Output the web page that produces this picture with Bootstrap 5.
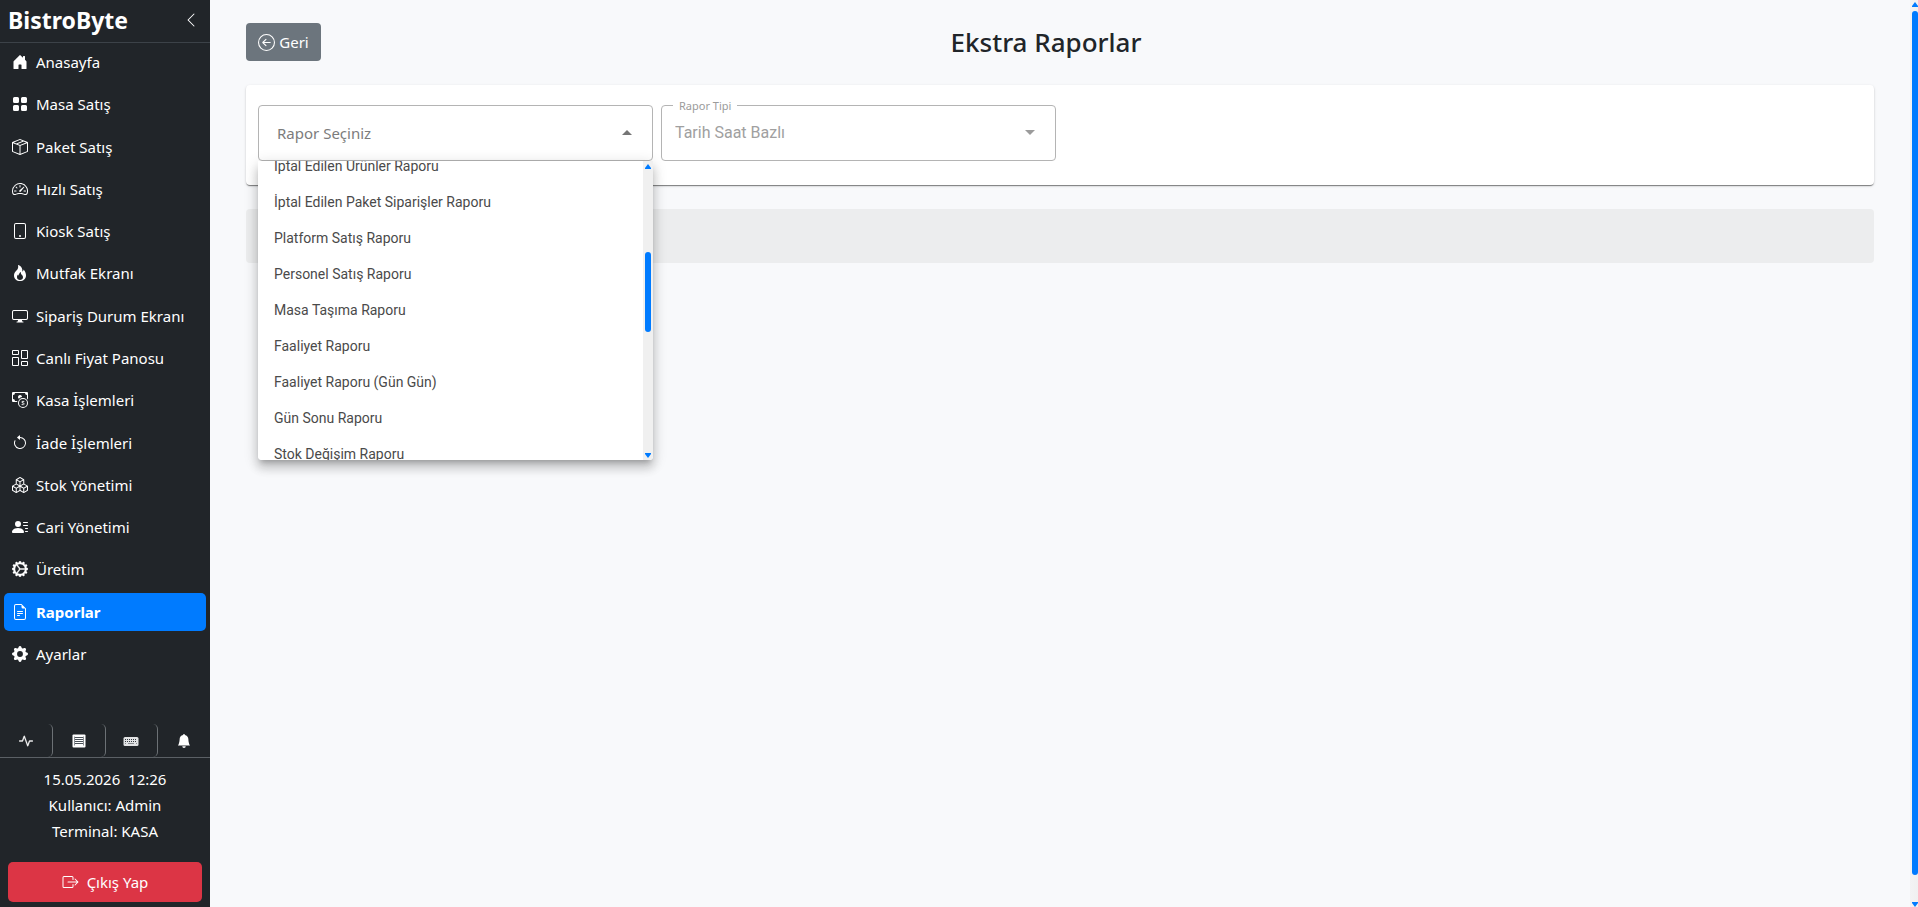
<!DOCTYPE html>
<html lang="tr">
<head>
<meta charset="utf-8">
<meta name="viewport" content="width=device-width, initial-scale=1">
<title>BistroByte - Ekstra Raporlar</title>
<link href="https://cdn.jsdelivr.net/npm/bootstrap@5.3.0/dist/css/bootstrap.min.css" rel="stylesheet">
<style>
  :root { --brand: #007bff; --track: #f0f0f0; }
  body { font-family: "Noto Sans", "Open Sans", sans-serif; font-size: 15px; background: #f8f9fb; }
  svg { display: block; flex: none; }
  .sidebar { width: 210px; background: #212529; color: #fff; }
  .brand-bar { height: 43px; padding: 0 11px 2px 8px; border-bottom: 1px solid #3c4248; }
  .brand-name { font-size: 23px; font-weight: 700; line-height: 32px; color: #fff; text-decoration: none; }
  .collapse-btn { background: none; border: 0; color: #fff; padding: 0; }
  .menu-list { padding: 0 4px 51px; }
  .menu-list .nav-link { color: #fff; height: 38px; padding: 0 8px; gap: 8px; line-height: 24px; border-radius: 5px; }
  .menu-list .nav-link.active { background: var(--brand); font-weight: 700; }
  .tray { border-bottom: 1px solid #5b6065; height: 34px; }
  .tray button { flex: 1 1 0; background: none; color: #fff; border: 0; border-right: 1px solid #6c7175; border-radius: 0 5px 5px 0; padding: 0; }
  .tray button:last-child { border-right: 0; }
  .session-info { line-height: 26px; padding: 8px 0 18px; }
  .exit-btn { height: 40px; margin: 0 8px 5px; font-size: 15px; background: #dc3545; gap: 8px; border-radius: 5px; }
  .page-body { padding: 23px 36px; }
  .page-head { display: grid; grid-template-columns: 1fr auto 1fr; padding-right: 28px; margin-bottom: 24px; }
  .back-btn { height: 38px; width: 75px; padding: 0; gap: 4px; font-size: 15px; background: #6c757d; border: 0; border-radius: 4px; }
  .page-title { font-size: 26px; font-weight: 500; line-height: 38px; margin: 0; color: #212529; }
  .filter-card { background: #fff; border-radius: 4px; padding: 20px 12px 24px; margin-bottom: 24px;
    box-shadow: 0 2px 1px -1px rgba(0,0,0,.3), 0 1px 1px rgba(0,0,0,.2), 0 1px 3px rgba(0,0,0,.14); }
  .filter-grid { display: grid; grid-template-columns: repeat(4, 1fr); gap: 8px; }
  .field { position: relative; }
  .field select { appearance: none; display: block; width: 100%; height: 56px; border: 1px solid #b4b4b4; border-radius: 4px; background: #fff; color: #7c7c7c; padding: 0 18px; font-size: 15px; opacity: 1; }
  .field select:disabled { font-family: Roboto, sans-serif; font-size: 16px; color: #a0a0a0; padding: 0 13px; }
  .field .arrow { position: absolute; right: 21px; top: 25px; pointer-events: none; }
  .field .legend-label { position: absolute; left: 12px; top: -8px; padding: 0 6px; background: #fff; color: #9b9b9b; font-size: 11px; line-height: 18px; }
  .options-panel { position: absolute; left: 0; right: 0; top: 56px; height: 299px; z-index: 5; background: #fff; overflow: hidden; border-radius: 0 0 4px 4px; }
  .panel-shadow { position: absolute; left: 0; right: 0; top: 56px; height: 299px; z-index: 4; border-radius: 4px;
    box-shadow: 0 5px 5px -3px rgba(0,0,0,.2), 0 8px 10px 1px rgba(0,0,0,.14), 0 3px 14px 2px rgba(0,0,0,.12); }
  .options-panel ul { margin: -13px 0 0; }
  .options-panel button { display: block; width: 100%; height: 36px; border: 0; background: none; text-align: left; padding: 0 16px; font: 14px/36px Roboto, sans-serif; color: #4a4a4a; }
  .bar { display: flex; flex-direction: column; align-items: center; background: var(--track); color: var(--brand); }
  .bar-panel { width: 10px; padding: 3px 0 2px; }
  .bar-panel .thumb { width: 6px; height: 80px; margin-bottom: 121px; }
  .bar-window { width: 8px; align-items: flex-end; padding: 2px 0 0; background: linear-gradient(90deg, #f3f3f4, #f0f0f0); }
  .thumb { background: var(--brand); border-radius: 3px; }
  .bar-window .thumb { width: 6px; flex: 1; margin: 4px 0 27px; }
  .result-strip { height: 54px; background: #ecedee; border-radius: 4px; }
</style>
</head>
<body>
<div class="d-flex min-vh-100">
  <aside class="sidebar d-flex flex-column vh-100 flex-shrink-0">
    <div class="brand-bar d-flex align-items-center justify-content-between">
      <a href="#" class="brand-name">BistroByte</a>
      <button type="button" class="collapse-btn" aria-label="Menüyü daralt"><svg width="16" height="16" fill="currentColor" viewBox="0 0 16 16"><path d="M11.354 1.646a.5.5 0 0 1 0 .708L5.707 8l5.647 5.646a.5.5 0 0 1-.708.708l-6-6a.5.5 0 0 1 0-.708l6-6a.5.5 0 0 1 .708 0z"/></svg></button>
    </div>
    <ul class="menu-list list-unstyled d-flex flex-column justify-content-between flex-grow-1 mb-0">
      <li><a href="#" class="nav-link d-flex align-items-center"><svg width="16" height="16" fill="currentColor" viewBox="0 0 16 16"><path d="M6.5 14.5v-3.505c0-.245.25-.495.5-.495h2c.25 0 .5.25.5.5v3.5a.5.5 0 0 0 .5.5h4a.5.5 0 0 0 .5-.5v-7a.5.5 0 0 0-.146-.354L13 5.793V2.5a.5.5 0 0 0-.5-.5h-1a.5.5 0 0 0-.5.5v1.293L8.354 1.146a.5.5 0 0 0-.708 0l-6 6A.5.5 0 0 0 1.5 7.5v7a.5.5 0 0 0 .5.5h4a.5.5 0 0 0 .5-.5z"/></svg>Anasayfa</a></li>
      <li><a href="#" class="nav-link d-flex align-items-center"><svg width="16" height="16" fill="currentColor" viewBox="0 0 16 16"><path d="M1 2.500A1.500 1.500 0 0 1 2.500 1h3A1.500 1.500 0 0 1 7 2.500v3A1.500 1.500 0 0 1 5.500 7h-3A1.500 1.500 0 0 1 1 5.500zm8 0A1.500 1.500 0 0 1 10.500 1h3A1.500 1.500 0 0 1 15 2.500v3A1.500 1.500 0 0 1 13.500 7h-3A1.500 1.500 0 0 1 9 5.500zm-8 8A1.500 1.500 0 0 1 2.500 9h3A1.500 1.500 0 0 1 7 10.500v3A1.500 1.500 0 0 1 5.500 15h-3A1.500 1.500 0 0 1 1 13.500zm8 0A1.500 1.500 0 0 1 10.500 9h3a1.500 1.500 0 0 1 1.500 1.500v3a1.500 1.500 0 0 1-1.500 1.500h-3A1.500 1.500 0 0 1 9 13.500z"/></svg>Masa Satış</a></li>
      <li><a href="#" class="nav-link d-flex align-items-center"><svg width="16" height="16" fill="currentColor" viewBox="0 0 16 16"><path d="M8.186 1.113a.5.5 0 0 0-.372 0L1.846 3.500l2.404.961L10.404 2l-2.218-.887zm3.564 1.426L5.596 5 8 5.961 14.154 3.500l-2.404-.961zm3.250 1.700-6.500 2.600v7.922l6.500-2.600V4.240zM7.500 14.762V6.838L1 4.239v7.923l6.500 2.600zM7.443.184a1.500 1.500 0 0 1 1.114 0l7.129 2.852A.5.5 0 0 1 16 3.500v8.662a1 1 0 0 1-.629.928l-7.185 2.874a.5.5 0 0 1-.372 0L.630 13.090a1 1 0 0 1-.630-.928V3.500a.5.5 0 0 1 .314-.464L7.443.184z"/></svg>Paket Satış</a></li>
      <li><a href="#" class="nav-link d-flex align-items-center"><svg width="16" height="16" fill="currentColor" viewBox="0 0 16 16"><path d="M8 4a.5.5 0 0 1 .5.5V6a.5.5 0 0 1-1 0V4.500A.5.5 0 0 1 8 4zM3.732 5.732a.5.5 0 0 1 .707 0l.915.914a.5.5 0 1 1-.708.708l-.914-.915a.5.5 0 0 1 0-.707zM2 10a.5.5 0 0 1 .5-.5h1.586a.5.5 0 0 1 0 1H2.500A.5.5 0 0 1 2 10zm9.500 0a.5.5 0 0 1 .5-.5h1.500a.5.5 0 0 1 0 1H12a.5.5 0 0 1-.5-.5zm.754-4.246a.389.389 0 0 0-.527-.020L7.547 9.310a.910.910 0 1 0 1.302 1.258l3.434-4.297a.389.389 0 0 0-.029-.518z"/><path fill-rule="evenodd" d="M0 10a8 8 0 1 1 15.547 2.661c-.442 1.253-1.845 1.602-2.932 1.250C11.309 13.488 9.475 13 8 13c-1.474 0-3.310.488-4.615.911-1.087.352-2.490.003-2.932-1.250A7.988 7.988 0 0 1 0 10zm8-7a7 7 0 0 0-6.603 9.329c.203.575.923.876 1.680.630C4.397 12.533 6.358 12 8 12s3.604.532 4.923.960c.757.245 1.477-.056 1.680-.631A7 7 0 0 0 8 3z"/></svg>Hızlı Satış</a></li>
      <li><a href="#" class="nav-link d-flex align-items-center"><svg width="16" height="16" fill="currentColor" viewBox="0 0 16 16"><path d="M12 1a1 1 0 0 1 1 1v12a1 1 0 0 1-1 1H4a1 1 0 0 1-1-1V2a1 1 0 0 1 1-1h8zM4 0a2 2 0 0 0-2 2v12a2 2 0 0 0 2 2h8a2 2 0 0 0 2-2V2a2 2 0 0 0-2-2H4z"/><path d="M8 14a1 1 0 1 0 0-2 1 1 0 0 0 0 2z"/></svg>Kiosk Satış</a></li>
      <li><a href="#" class="nav-link d-flex align-items-center"><svg width="16" height="16" fill="currentColor" viewBox="0 0 16 16"><path d="M8 16c3.314 0 6-2 6-5.500 0-1.500-.5-4-2.500-6 .25 1.500-1.250 2-1.250 2C11 4 9 .5 6 0c.357 2 .5 4-2 6-1.250 1-2 2.729-2 4.500C2 14 4.686 16 8 16Zm0-1c-1.657 0-3-1-3-2.750 0-.750.250-2 1.250-3C6.125 10 7 10.500 7 10.500c-.375-1.250.5-3.250 2-3.500-.179 1-.250 2 1 3 .625.5 1 1.364 1 2.250C11 14 9.657 15 8 15Z"/></svg>Mutfak Ekranı</a></li>
      <li><a href="#" class="nav-link d-flex align-items-center"><svg width="16" height="16" fill="currentColor" viewBox="0 0 16 16"><path d="M0 4s0-2 2-2h12s2 0 2 2v6s0 2-2 2h-4c0 .667.083 1.167.250 1.500H11a.5.5 0 0 1 0 1H5a.5.5 0 0 1 0-1h.750c.167-.333.250-.833.250-1.500H2s-2 0-2-2V4zm1.398-.855a.758.758 0 0 0-.254.302A1.460 1.460 0 0 0 1 4.010V10c0 .325.078.502.145.602.070.105.170.188.302.254a1.464 1.464 0 0 0 .538.143L2.010 11H14c.325 0 .502-.078.602-.145a.758.758 0 0 0 .254-.302 1.464 1.464 0 0 0 .143-.538L15 9.990V4c0-.325-.078-.502-.145-.602a.757.757 0 0 0-.302-.254A1.460 1.460 0 0 0 13.990 3H2c-.325 0-.502.078-.602.145z"/></svg>Sipariş Durum Ekranı</a></li>
      <li><a href="#" class="nav-link d-flex align-items-center"><svg width="16" height="16" fill="currentColor" viewBox="0 0 16 16"><path d="M6 1v3H1V1h5zM1 0a1 1 0 0 0-1 1v3a1 1 0 0 0 1 1h5a1 1 0 0 0 1-1V1a1 1 0 0 0-1-1H1zm14 12v3h-5v-3h5zm-5-1a1 1 0 0 0-1 1v3a1 1 0 0 0 1 1h5a1 1 0 0 0 1-1v-3a1 1 0 0 0-1-1h-5zM6 8v7H1V8h5zM1 7a1 1 0 0 0-1 1v7a1 1 0 0 0 1 1h5a1 1 0 0 0 1-1V8a1 1 0 0 0-1-1H1zm14-6v7h-5V1h5zm-5-1a1 1 0 0 0-1 1v7a1 1 0 0 0 1 1h5a1 1 0 0 0 1-1V1a1 1 0 0 0-1-1h-5z"/></svg>Canlı Fiyat Panosu</a></li>
      <li><a href="#" class="nav-link d-flex align-items-center"><svg width="16" height="16" fill="currentColor" viewBox="0 0 16 16"><path fill-rule="evenodd" d="M11 15a4 4 0 1 0 0-8 4 4 0 0 0 0 8zm5-4a5 5 0 1 1-10 0 5 5 0 0 1 10 0z"/><path d="M9.438 11.944c.047.596.518 1.060 1.363 1.116v.440h.375v-.443c.875-.061 1.386-.529 1.386-1.207 0-.618-.390-.936-1.090-1.100l-.296-.070v-1.200c.376.043.614.248.671.532h.658c-.047-.575-.540-1.024-1.329-1.073V8.500h-.375v.450c-.747.073-1.255.522-1.255 1.158 0 .562.378.920 1.007 1.066l.248.061v1.272c-.384-.058-.639-.270-.696-.563h-.668zm1.360-1.354c-.369-.085-.569-.260-.569-.522 0-.294.216-.514.572-.578v1.100h-.003zm.432.746c.449.104.655.272.655.569 0 .339-.257.571-.709.614v-1.195l.054.012z"/><path d="M1 0a1 1 0 0 0-1 1v8a1 1 0 0 0 1 1h4.083c.058-.344.145-.678.258-1H3a2 2 0 0 0-2-2V3a2 2 0 0 0 2-2h10a2 2 0 0 0 2 2v3.528c.380.340.717.728 1 1.154V1a1 1 0 0 0-1-1H1z"/><path d="M9.998 5.083 10 5a2 2 0 1 0-3.132 1.650 5.982 5.982 0 0 1 3.130-1.567z"/></svg>Kasa İşlemleri</a></li>
      <li><a href="#" class="nav-link d-flex align-items-center"><svg width="16" height="16" fill="currentColor" viewBox="0 0 16 16"><path fill-rule="evenodd" d="M8 3a5 5 0 1 1-4.546 2.914.5.5 0 0 0-.908-.417A6 6 0 1 0 8 2v1z"/><path d="M8 4.466V.534a.250.250 0 0 0-.410-.192L5.230 2.308a.250.250 0 0 0 0 .384l2.360 1.966A.250.250 0 0 0 8 4.466z"/></svg>İade İşlemleri</a></li>
      <li><a href="#" class="nav-link d-flex align-items-center"><svg width="16" height="16" fill="currentColor" viewBox="0 0 16 16"><path d="M7.752.066a.5.5 0 0 1 .496 0l3.750 2.143a.5.5 0 0 1 .252.434v3.995l3.498 2A.5.5 0 0 1 16 9.070v4.286a.5.5 0 0 1-.252.434l-3.750 2.143a.5.5 0 0 1-.496 0l-3.502-2-3.502 2.001a.5.5 0 0 1-.496 0l-3.750-2.143A.5.5 0 0 1 0 13.357V9.071a.5.5 0 0 1 .252-.434L3.750 6.638V2.643a.5.5 0 0 1 .252-.434L7.752.066ZM4.250 7.504 1.508 9.071l2.742 1.567 2.742-1.567L4.250 7.504ZM7.500 9.933l-2.750 1.571v3.134l2.750-1.571V9.933Zm1 3.134 2.750 1.571v-3.134L8.500 9.933v3.134Zm.508-3.996 2.742 1.567 2.742-1.567-2.742-1.567-2.742 1.567Zm2.242-2.433V3.504L8.500 5.076V8.210l2.750-1.572ZM7.500 8.210V5.076L4.750 3.504v3.134L7.500 8.210ZM5.258 2.643 8 4.210l2.742-1.567L8 1.076 5.258 2.643ZM15 9.933l-2.750 1.571v3.134L15 13.067V9.933ZM3.750 14.638v-3.134L1 9.933v3.134l2.750 1.571Z"/></svg>Stok Yönetimi</a></li>
      <li><a href="#" class="nav-link d-flex align-items-center"><svg width="16" height="16" fill="currentColor" viewBox="0 0 16 16"><path d="M6 8a3 3 0 1 0 0-6 3 3 0 0 0 0 6zm-5 6s-1 0-1-1 1-4 6-4 6 3 6 4-1 1-1 1H1zM11 3.500a.5.5 0 0 1 .5-.5h4a.5.5 0 0 1 0 1h-4a.5.5 0 0 1-.5-.5zm.5 2.500a.5.5 0 0 0 0 1h4a.5.5 0 0 0 0-1h-4zm2 3a.5.5 0 0 0 0 1h2a.5.5 0 0 0 0-1h-2zm0 3a.5.5 0 0 0 0 1h2a.5.5 0 0 0 0-1h-2z"/></svg>Cari Yönetimi</a></li>
      <li><a href="#" class="nav-link d-flex align-items-center"><svg width="16" height="16" fill="currentColor" stroke="currentColor" stroke-width=".4" viewBox="0 0 16 16"><path d="M7.068.727c.243-.970 1.620-.970 1.864 0l.071.286a.960.960 0 0 0 1.622.434l.205-.211c.695-.719 1.888-.030 1.613.931l-.080.284a.960.960 0 0 0 1.187 1.187l.283-.081c.960-.275 1.650.918.931 1.613l-.211.205a.960.960 0 0 0 .434 1.622l.286.071c.970.243.970 1.620 0 1.864l-.286.071a.960.960 0 0 0-.434 1.622l.211.205c.719.695.030 1.888-.931 1.613l-.284-.080a.960.960 0 0 0-1.187 1.187l.081.283c.275.960-.918 1.650-1.613.931l-.205-.211a.960.960 0 0 0-1.622.434l-.071.286c-.243.970-1.620.970-1.864 0l-.071-.286a.960.960 0 0 0-1.622-.434l-.205.211c-.695.719-1.888.030-1.613-.931l.080-.284a.960.960 0 0 0-1.186-1.187l-.284.081c-.960.275-1.650-.918-.931-1.613l.211-.205a.960.960 0 0 0-.434-1.622l-.286-.071c-.970-.243-.970-1.620 0-1.864l.286-.071a.960.960 0 0 0 .434-1.622l-.211-.205c-.719-.695-.030-1.888.931-1.613l.284.080a.960.960 0 0 0 1.187-1.186l-.081-.284c-.275-.960.918-1.650 1.613-.931l.205.211a.960.960 0 0 0 1.622-.434l.071-.286zM12.973 8.500H8.250l-2.834 3.779A4.998 4.998 0 0 0 12.973 8.500zm0-1a4.998 4.998 0 0 0-7.557-3.779l2.834 3.780h4.723zM5.048 3.967c-.030.021-.058.043-.087.065l.087-.065zm-.431.355A4.984 4.984 0 0 0 3.002 8c0 1.455.622 2.765 1.615 3.678L7.375 8 4.617 4.322zm.344 7.646.087.065-.087-.065z"/></svg>Üretim</a></li>
      <li><a href="#" class="nav-link active d-flex align-items-center" aria-current="page"><svg width="16" height="16" fill="currentColor" viewBox="0 0 16 16"><path d="M5.500 7a.5.5 0 0 0 0 1h5a.5.5 0 0 0 0-1h-5zM5 9.500a.5.5 0 0 1 .5-.5h5a.5.5 0 0 1 0 1h-5a.5.5 0 0 1-.5-.5zm0 2a.5.5 0 0 1 .5-.5h2a.5.5 0 0 1 0 1h-2a.5.5 0 0 1-.5-.5z"/><path d="M9.500 0H4a2 2 0 0 0-2 2v12a2 2 0 0 0 2 2h8a2 2 0 0 0 2-2V4.500L9.500 0zm0 1v2A1.500 1.500 0 0 0 11 4.500h2V14a1 1 0 0 1-1 1H4a1 1 0 0 1-1-1V2a1 1 0 0 1 1-1h5.500z"/></svg>Raporlar</a></li>
      <li><a href="#" class="nav-link d-flex align-items-center"><svg width="16" height="16" fill="currentColor" viewBox="0 0 16 16"><path d="M9.405 1.050c-.413-1.400-2.397-1.400-2.810 0l-.100.340a1.464 1.464 0 0 1-2.105.872l-.310-.170c-1.283-.698-2.686.705-1.987 1.987l.169.311c.446.820.023 1.841-.872 2.105l-.340.100c-1.400.413-1.400 2.397 0 2.810l.340.100a1.464 1.464 0 0 1 .872 2.105l-.170.310c-.698 1.283.705 2.686 1.987 1.987l.311-.169a1.464 1.464 0 0 1 2.105.872l.100.340c.413 1.400 2.397 1.400 2.810 0l.100-.340a1.464 1.464 0 0 1 2.105-.872l.310.170c1.283.698 2.686-.705 1.987-1.987l-.169-.311a1.464 1.464 0 0 1 .872-2.105l.340-.100c1.400-.413 1.400-2.397 0-2.810l-.340-.100a1.464 1.464 0 0 1-.872-2.105l.170-.310c.698-1.283-.705-2.686-1.987-1.987l-.311.169a1.464 1.464 0 0 1-2.105-.872l-.100-.340zM8 10.930a2.929 2.929 0 1 1 0-5.860 2.929 2.929 0 0 1 0 5.858z"/></svg>Ayarlar</a></li>
    </ul>
    <div class="tray d-flex">
      <button type="button" class="d-flex align-items-center justify-content-center" aria-label="Durum"><svg width="14" height="14" fill="currentColor" viewBox="0 0 16 16"><path d="M6 2a.5.5 0 0 1 .470.330L10 12.036l1.530-4.208A.5.5 0 0 1 12 7.500h3.500a.5.5 0 0 1 0 1h-3.150l-1.880 5.170a.5.5 0 0 1-.940 0L6 3.964 4.470 8.171A.5.5 0 0 1 4 8.500H.5a.5.5 0 0 1 0-1h3.150l1.880-5.170A.5.5 0 0 1 6 2Z" stroke="currentColor" stroke-width=".4"/></svg></button>
      <button type="button" class="d-flex align-items-center justify-content-center" aria-label="Haberler"><svg width="14" height="14" viewBox="0 0 14 14"><rect x=".5" y=".5" width="13" height="13" rx="1" fill="#fff"/><path d="M3 3.500h8M3 5.500h8M3 7.500h8M3 9.500h8" stroke="#495057" stroke-width="1"/><path d="M2.500 2.500v9M11.500 2.500v9" stroke="#8a8e92" stroke-width="1"/></svg></button>
      <button type="button" class="d-flex align-items-center justify-content-center" aria-label="Klavye"><svg width="16" height="16" viewBox="0 0 16 16"><rect x=".5" y="4" width="15" height="9" rx="1.500" fill="#e2e3e4"/><path d="M2 6.500h12M2 8.500h12" stroke="#343a40" stroke-dasharray="1 1"/><path d="M2 10.500h1M5 10.500h6M13 10.500h1" stroke="#868a8e"/></svg></button>
      <button type="button" class="d-flex align-items-center justify-content-center" aria-label="Bildirimler"><svg width="14" height="14" fill="currentColor" viewBox="0 0 16 16"><path d="M8 16a2 2 0 0 0 2-2H6a2 2 0 0 0 2 2zm.995-14.901a1 1 0 1 0-1.990 0A5.002 5.002 0 0 0 3 6c0 1.098-.5 6-2 7h14c-1.500-1-2-5.902-2-7 0-2.420-1.720-4.440-4.005-4.901z"/></svg></button>
    </div>
    <div class="session-info text-center">
      <div>15.05.2026 &nbsp;12:26</div>
      <div>Kullanıcı: Admin</div>
      <div>Terminal: KASA</div>
    </div>
    <button type="button" class="exit-btn btn btn-danger border-0 d-flex align-items-center justify-content-center"><svg width="17" height="16" fill="currentColor" viewBox="0 0 16 16"><path fill-rule="evenodd" d="M10 12.500a.5.5 0 0 1-.5.5h-8a.5.5 0 0 1-.5-.5v-9a.5.5 0 0 1 .5-.5h8a.5.5 0 0 1 .5.5v2a.5.5 0 0 0 1 0v-2A1.500 1.500 0 0 0 9.500 2h-8A1.500 1.500 0 0 0 0 3.500v9A1.500 1.500 0 0 0 1.500 14h8a1.500 1.500 0 0 0 1.500-1.500v-2a.5.5 0 0 0-1 0v2z"/><path fill-rule="evenodd" d="M15.854 8.354a.5.5 0 0 0 0-.708l-3-3a.5.5 0 0 0-.708.708L14.293 7.500H5.500a.5.5 0 0 0 0 1h8.793l-2.147 2.146a.5.5 0 0 0 .708.708l3-3z"/></svg>Çıkış Yap</button>
  </aside>

  <main class="page-body flex-grow-1">
    <div class="page-head">
      <div><button type="button" class="back-btn btn btn-secondary d-flex align-items-center justify-content-center"><svg width="17" height="17" fill="currentColor" viewBox="0 0 16 16"><path fill-rule="evenodd" d="M1 8a7 7 0 1 0 14 0A7 7 0 0 0 1 8zm15 0A8 8 0 1 1 0 8a8 8 0 0 1 16 0zm-4.500-.5a.5.5 0 0 1 0 1H5.707l2.147 2.146a.5.5 0 0 1-.708.708l-3-3a.5.5 0 0 1 0-.708l3-3a.5.5 0 1 1 .708.708L5.707 7.500H11.500z"/></svg>Geri</button></div>
      <h1 class="page-title">Ekstra Raporlar</h1>
    </div>

    <section class="filter-card">
      <div class="filter-grid">
        <div class="field">
          <select id="report" aria-label="Rapor Seçiniz"><option>Rapor Seçiniz</option></select>
          <svg class="arrow" width="10" height="5" viewBox="0 0 10 5"><path d="M0 5 5 0l5 5z" fill="#757575"/></svg>
          <div class="panel-shadow"></div>
          <div class="options-panel d-flex">
            <ul class="list-unstyled flex-grow-1">
              <li><button type="button">İptal Edilen Ürünler Raporu</button></li>
              <li><button type="button">İptal Edilen Paket Siparişler Raporu</button></li>
              <li><button type="button">Platform Satış Raporu</button></li>
              <li><button type="button">Personel Satış Raporu</button></li>
              <li><button type="button">Masa Taşıma Raporu</button></li>
              <li><button type="button">Faaliyet Raporu</button></li>
              <li><button type="button">Faaliyet Raporu (Gün Gün)</button></li>
              <li><button type="button">Gün Sonu Raporu</button></li>
              <li><button type="button">Stok Değişim Raporu</button></li>
            </ul>
            <div class="bar bar-panel justify-content-between" aria-hidden="true">
              <svg width="6" height="5" viewBox="0 0 6 5" fill="currentColor"><path d="M0 5V4l3-4 3 4v1z"/></svg>
              <div class="thumb mt-auto"></div>
              <svg width="6" height="5" viewBox="0 0 6 5" fill="currentColor"><path d="M0 0v1l3 4 3-4V0z"/></svg>
            </div>
          </div>
        </div>
        <div class="field">
          <label class="legend-label" for="report-type">Rapor Tipi</label>
          <select id="report-type" disabled><option>Tarih Saat Bazlı</option></select>
          <svg class="arrow" width="10" height="5" viewBox="0 0 10 5"><path d="M0 0l5 5 5-5z" fill="#9b9b9b"/></svg>
        </div>
      </div>
    </section>

    <div class="result-strip"></div>
  </main>

  <div class="bar bar-window vh-100 flex-shrink-0" aria-hidden="true">
    <svg width="6" height="5" viewBox="0 0 6 5" fill="currentColor"><path d="M0 5V4l3-4 3 4v1z"/></svg>
    <div class="thumb"></div>
    <svg width="6" height="5" viewBox="0 0 6 5" fill="currentColor"><path d="M0 0v1l3 4 3-4V0z"/></svg>
  </div>
</div>
<script src="https://cdn.jsdelivr.net/npm/bootstrap@5.3.0/dist/js/bootstrap.bundle.min.js"></script>
</body>
</html>
